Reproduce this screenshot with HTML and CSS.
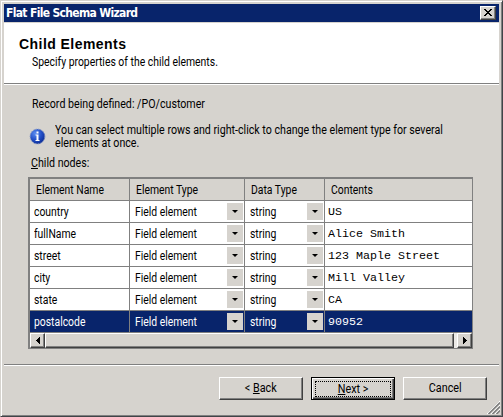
FILE: index.html
```html
<!DOCTYPE html>
<html lang="en">
<head>
<meta charset="utf-8">
<title>Flat File Schema Wizard</title>
<link rel="stylesheet" href="styles.css">
</head>
<body>
<div class="window">
  <div class="titlebar"><span class="title">Flat File Schema Wizard</span>
    <button class="close" aria-label="Close"><svg width="8" height="7" viewBox="0 0 8 7" shape-rendering="crispEdges"><path d="M0 0h2v1h1v1h2v-1h1v-1h2v1h-1v1h-1v1h-1v1h1v1h1v1h1v1h-2v-1h-1v-1h-2v1h-1v1h-2v-1h1v-1h1v-1h1v-1h-1v-1h-1v-1h-1z"/></svg></button>
  </div>
  <header class="head"><h1>Child Elements</h1><p class="narrow">Specify properties of the child elements.</p></header>
  <main class="main">
    <p class="record narrow">Record being defined: /PO/customer</p>
    <div class="info">
      <svg class="info-icon" width="17" height="17" viewBox="0 0 17 17"><defs><radialGradient id="g" cx=".35" cy=".3" r=".75"><stop offset="0" stop-color="#5b8df0"/><stop offset=".55" stop-color="#2450c8"/><stop offset="1" stop-color="#0c2c94"/></radialGradient></defs><circle cx="8.5" cy="8.5" r="7.4" fill="url(#g)" stroke="#8b9bc4" stroke-width="1" stroke-dasharray="1.5 1"/><path d="M7.5 3.5h2v2h-2zM6.5 6.5h3v5.500h1v1h-4v-1h1v-4.500h-1z" fill="#fff"/></svg>
      <p class="narrow">You can select multiple rows and right-click to change the element type for several<br>elements at once.</p>
    </div>
    <p class="label narrow"><u>C</u>hild nodes:</p>
    <div class="grid">
      <div class="row hdr"><div><span>Element Name</span></div><div><span>Element Type</span></div><div><span>Data Type</span></div><div><span>Contents</span></div></div>
      <div class="row"><div><span>country</span></div><div><span>Field element</span><i></i></div><div><span>string</span><i></i></div><div class="mono">US</div></div>
      <div class="row"><div><span>fullName</span></div><div><span>Field element</span><i></i></div><div><span>string</span><i></i></div><div class="mono">Alice Smith</div></div>
      <div class="row"><div><span>street</span></div><div><span>Field element</span><i></i></div><div><span>string</span><i></i></div><div class="mono">123 Maple Street</div></div>
      <div class="row"><div><span>city</span></div><div><span>Field element</span><i></i></div><div><span>string</span><i></i></div><div class="mono">Mill Valley</div></div>
      <div class="row"><div><span>state</span></div><div><span>Field element</span><i></i></div><div><span>string</span><i></i></div><div class="mono">CA</div></div>
      <div class="row sel"><div><span>postalcode</span></div><div><span>Field element</span><i></i></div><div><span>string</span><i></i></div><div class="mono">90952</div></div>
      <div class="scroll">
        <span class="sb"><svg width="4" height="7" viewBox="0 0 4 7" shape-rendering="crispEdges"><path d="M3 0h1v7h-1v-1h-1v-1h-1v-1h-1v-1h1v-1h1v-1h1z"/></svg></span>
        <span class="thumb"></span>
        <span class="sb"><svg width="4" height="7" viewBox="0 0 4 7" shape-rendering="crispEdges"><path d="M0 0h1v1h1v1h1v1h1v1h-1v1h-1v1h-1v1h-1z"/></svg></span>
      </div>
    </div>
  </main>
  <footer class="foot">
    <button class="btn back"><b>&lt; <u>B</u>ack</b></button>
    <button class="btn next"><span><b><u>N</u>ext &gt;</b></span></button>
    <button class="btn cancel"><b>Cancel</b></button>
  </footer>
  <svg class="grip" width="13" height="13" viewBox="0 0 13 13"><path d="M0 13L13 0M4 13L13 4M8 13L13 8" stroke="#fff"/><path d="M1.500 13L13 1.500M5.500 13L13 5.500M9.500 13L13 9.500" stroke="#808080" stroke-width="1.6"/></svg>
</div>
</body>
</html>
```
FILE: styles.css
```css
* { box-sizing: border-box; }
body { margin: 0; background: #d6d3ce; overflow: hidden; }
h1, p { margin: 0; font-weight: normal; }
u { text-decoration: underline 1px; text-underline-offset: 1px; text-decoration-skip-ink: none; }
.window {
  position: relative; width: 503px; height: 417px; padding: 2px 2px 0 2px;
  display: flex; flex-direction: column;
  border: 1px solid; border-color: #d6d3ce #404448 #404448 #d6d3ce;
  box-shadow: inset 1px 1px #fff, inset -1px -1px #808080;
  background: #d6d3ce; color: #000;
  font: 12px/13px Roboto, "Liberation Sans", sans-serif;
}
.narrow { transform: scaleX(.888); transform-origin: 0 50%; white-space: nowrap; }
.titlebar {
  height: 18px; margin: 1px 1px 0; padding: 0 2px; background: #08246b; color: #fff;
  display: flex; align-items: center; justify-content: space-between;
}
.title { font: bold 12px/18px "DejaVu Sans Condensed", sans-serif; letter-spacing: -0.67px; white-space: nowrap; }
.close {
  width: 16px; height: 14px; margin: 0 1px 0 0; padding: 0 0 1px; display: flex; align-items: center; justify-content: center;
  background: #d6d3ce; border: 1px solid; border-color: #fff #404040 #404040 #fff; box-shadow: inset -1px -1px #808080;
}
.head {
  height: 62px; margin: 0 1px; padding: 13px 0 0 15px; background: #fff;
  border-top: 1px solid #d6d3ce; border-bottom: 1px solid #808080; box-shadow: 0 1px #fff;
}
h1 { font: bold 14px/16px "Liberation Sans", sans-serif; letter-spacing: 0.45px; white-space: nowrap; }
.head p { margin: 3px 0 0 13px; line-height: 14px; transform: scaleX(.867); }
.main { height: 280px; padding: 13px 0 0 25px; }
.record { margin-left: 4px; line-height: 14px; }
.info { display: flex; height: 29px; margin-top: 12px; }
.info-icon { margin: 5px 9px 0 1px; flex: none; }
.info p { margin-top: 1px; }
.label { margin: 4px 0 0 3px; line-height: 14px; }
.grid {
  width: 445px; height: 172px; margin-top: 7px;
  border: solid #808080; border-width: 2px 1px 1px 2px; background: #fff;
}
.row { display: grid; grid-template-columns: 100px 115px 80px 1fr; height: 22px; }
.row > div {
  display: flex; align-items: center; padding: 1px 0 0 4px; white-space: nowrap;
  border-right: 1px solid #808080; border-bottom: 1px solid #808080;
}
.row span { transform: scaleX(.865); transform-origin: 0 50%; }
.row > div:last-child { border-right: 0; }
.row > div:nth-child(2), .row > div:nth-child(3) { padding-left: 5px; }
.row > .mono { font: 11.67px/13px "Liberation Mono", monospace; padding: 2px 0 0 3px; }
.hdr > div, .hdr > div:nth-child(n) { background: #d6d3ce; padding-left: 6px; }
.sel > div { background: #08246b; color: #fff; }
.row i {
  width: 16px; height: 17px; margin: -1px 1px 0 auto; background: #d6d3ce;
  display: flex; align-items: center; justify-content: center;
}
.row i::before { content: ""; border: solid transparent; border-width: 3px 3px 0; border-top-color: #000; }
.scroll { height: 15px; display: flex; background: #ebe9e6; }
.sb, .thumb { background: #d6d3ce; border: 1px solid; border-color: #fff #404040 #404040 #fff; box-shadow: inset -1px -1px #808080; }
.sb { width: 15px; display: flex; align-items: center; justify-content: center; flex: none; }
.thumb { width: 409px; margin-right: auto; }
.foot {
  height: 50px; margin: 0 1px; padding: 12px 12px 0 0; border-top: 1px solid #808080; box-shadow: inset 0 1px #fff;
  display: flex; justify-content: flex-end;
}
.btn {
  width: 84px; height: 23px; padding: 0; background: #d6d3ce; color: #000; font: inherit;
  border: 1px solid; border-color: #fff #404040 #404040 #fff; box-shadow: inset -1px -1px #808080;
}
.btn b { display: inline-block; font-weight: normal; transform: scaleX(.9); }
.next { margin: 0 8px; border-color: #000; padding: 2px; box-shadow: inset 1px 1px #fff, inset -1px -1px #404040, inset -2px -2px #808080; }
.next span { display: block; height: 16px; line-height: 14px; margin: 0 1px; border: 1px dotted #000; }
.grip { position: absolute; right: 2px; bottom: 2px; }
```
